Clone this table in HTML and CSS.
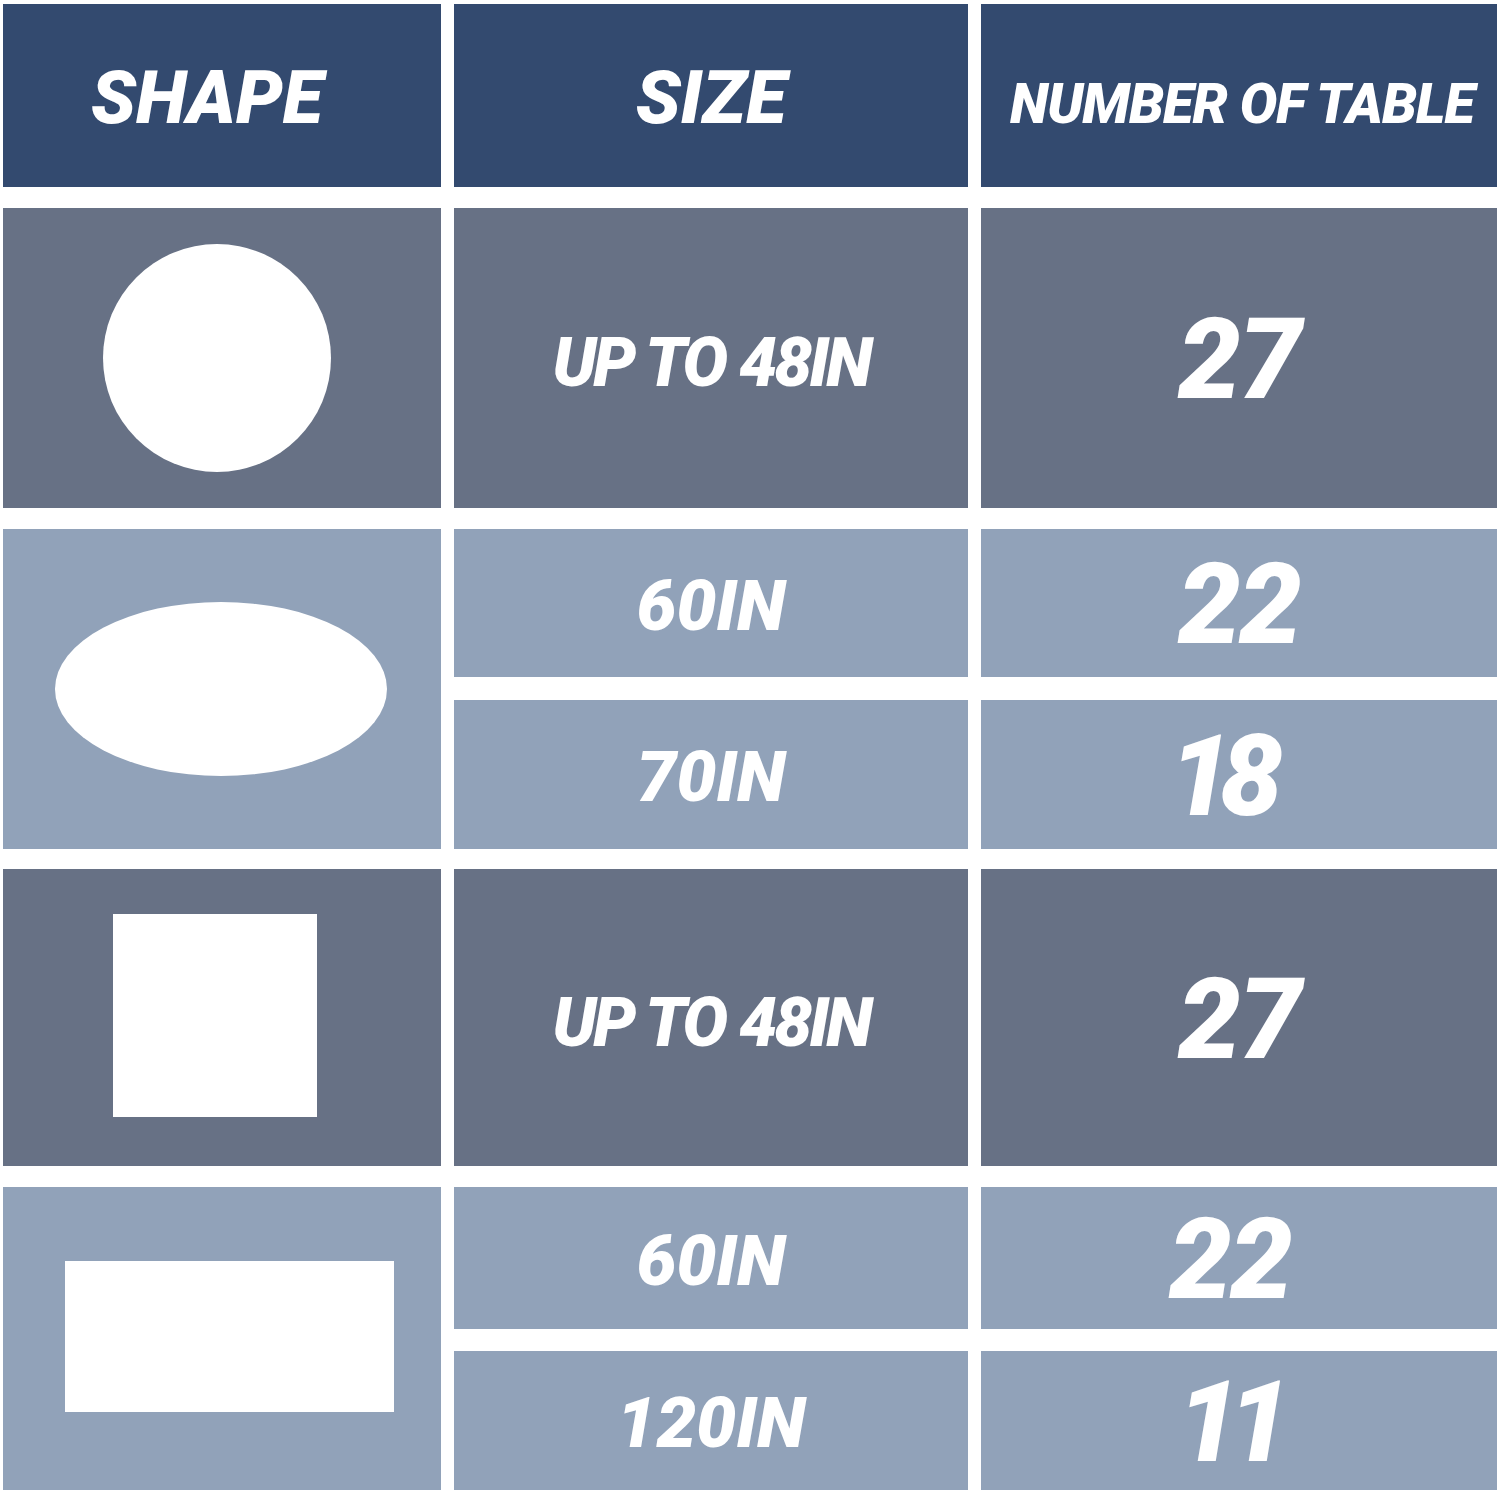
FILE: index.html
```html
<!DOCTYPE html>
<html>
<head>
<meta charset="utf-8">
<link rel="stylesheet" href="styles.css">
</head>
<body>
<div class="table">
  <div class="group head">
    <div class="cell hdr"><span class="t-head shape-h">SHAPE</span></div>
    <div class="cell hdr"><span class="t-head">SIZE</span></div>
    <div class="cell hdr"><span class="t-head small">NUMBER OF TABLE</span></div>
  </div>

  <div class="group g1">
    <div class="cell dark"><div class="shape circle"></div></div>
    <div class="cell dark"><span class="t-size">UP TO 48IN</span></div>
    <div class="cell dark"><span class="t-num">27</span></div>
  </div>

  <div class="group g2 split">
    <div class="cell light span"><div class="shape oval"></div></div>
    <div class="cell light"><span class="t-size short">60IN</span></div>
    <div class="cell light"><span class="t-num">22</span></div>
    <div class="cell light"><span class="t-size short">70IN</span></div>
    <div class="cell light"><span class="t-num ones eighteen">18</span></div>
  </div>

  <div class="group g3">
    <div class="cell dark"><div class="shape square"></div></div>
    <div class="cell dark"><span class="t-size">UP TO 48IN</span></div>
    <div class="cell dark"><span class="t-num">27</span></div>
  </div>

  <div class="group g4 split">
    <div class="cell light span"><div class="shape rect"></div></div>
    <div class="cell light"><span class="t-size short">60IN</span></div>
    <div class="cell light"><span class="t-num left">22</span></div>
    <div class="cell light"><span class="t-size short">120IN</span></div>
    <div class="cell light"><span class="t-num ones">11</span></div>
  </div>
</div>
</body>
</html>
```

FILE: styles.css
```css
html, body {
  margin: 0;
  padding: 0;
  background: #ffffff;
}
body {
  width: 1500px;
  height: 1494px;
  font-family: Roboto, "Open Sans", "DejaVu Sans", sans-serif;
}
.table {
  box-sizing: border-box;
  padding: 4px 3px 4px 3px;
  display: flex;
  flex-direction: column;
  gap: 21px;
}
.group {
  display: grid;
  grid-template-columns: 438px 514px 516px;
  column-gap: 13px;
}
.head { height: 183px; }
.g1 { height: 300px; }
.g2 { height: 320px; grid-template-rows: 148px 149px; row-gap: 23px; }
.g3 { height: 297px; margin-top: -1px; }
.g4 { height: 303px; grid-template-rows: 142px 139px; row-gap: 22px; }
.span { grid-row: 1 / span 2; grid-column: 1; }

.cell {
  display: flex;
  align-items: center;
  justify-content: center;
  color: #ffffff;
  overflow: hidden;
}
.hdr { background: #334a6f; }
.dark { background: #677185; }
.light { background: #91a2b9; }

.t-head {
  font-weight: 900;
  font-style: italic;
  font-size: 74px;
  letter-spacing: 0;
  line-height: 1;
  transform: translateY(2px);
}
.t-head.shape-h { transform: translate(-15px, 2px); }
.t-head.small {
  font-size: 56px;
  letter-spacing: -1px;
  transform: translate(3px, 8px);
}
.t-size {
  font-weight: 900;
  font-style: italic;
  font-size: 68px;
  line-height: 1;
  letter-spacing: -3px;
  transform: translateY(5px);
}
.t-size.short {
  font-size: 71px;
  letter-spacing: 0;
  transform: translateY(2px);
}
.t-num {
  font-weight: 900;
  font-style: italic;
  font-size: 112px;
  line-height: 1;
  letter-spacing: -2px;
  transform: translateY(2px);
}
.t-num.left { transform: translate(-9px, 2px); }
.t-num.ones {
  letter-spacing: -12px;
  transform: translate(-11px, 2px);
}
.t-num.eighteen { transform: translate(-19px, 2px); }

.shape { background: #ffffff; }
.circle {
  width: 228px;
  height: 228px;
  border-radius: 50%;
  transform: translate(-5px, 0);
}
.oval {
  width: 332px;
  height: 174px;
  border-radius: 50%;
  transform: translate(-1px, 0);
}
.square {
  width: 204px;
  height: 203px;
  transform: translate(-7px, -2px);
}
.rect {
  width: 329px;
  height: 151px;
  transform: translate(7px, -2px);
}
```
